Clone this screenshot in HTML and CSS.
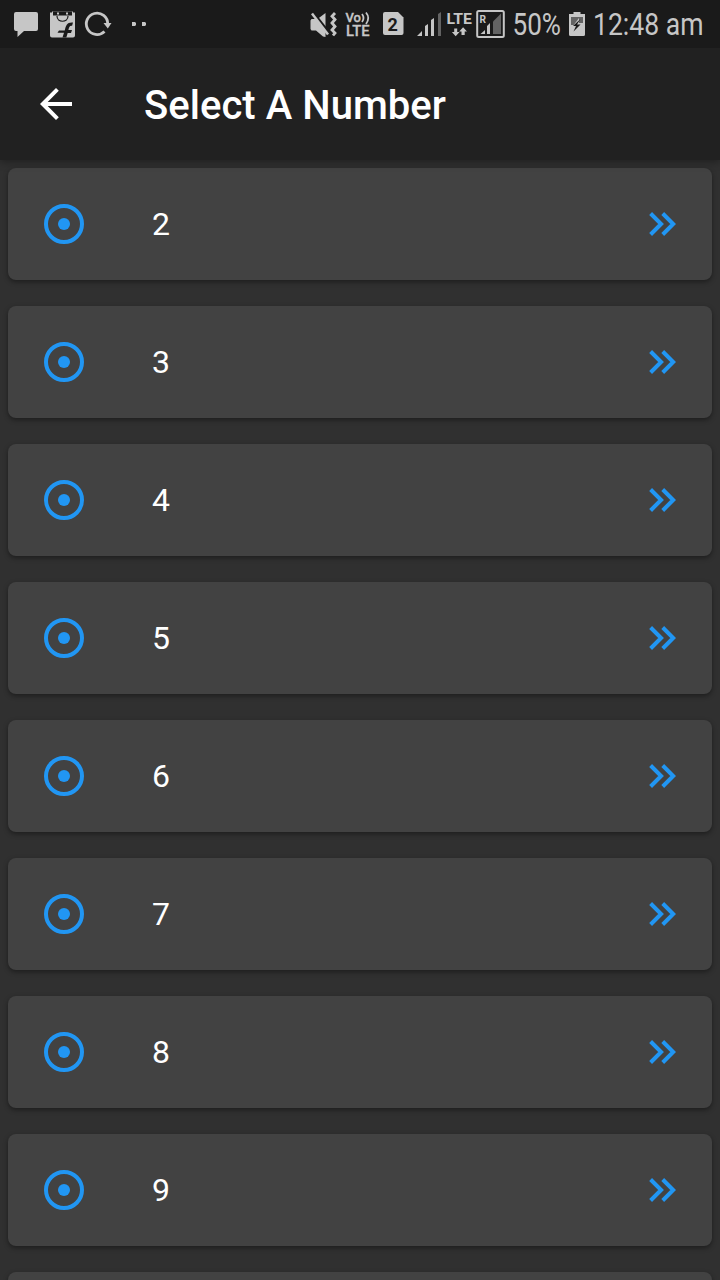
FILE: index.html
```
<!DOCTYPE html>
<html lang="en">
<head>
<meta charset="utf-8">
<title>Select A Number</title>
<link rel="stylesheet" href="styles.css">
</head>
<body>
<div class="status">
  <svg width="300" height="48" viewBox="0 0 300 48">
    <path d="M16 12h20q2 0 2 2v15q0 2-2 2H24l-6.500 6V31h-1.500q-2 0-2-2V14q0-2 2-2z"/>
    <path d="M50 12.500h2v-1h21v1h2v23q0 2-2 2H52q-2 0-2-2z"/>
    <path class="ink" d="M53 11.500h19v4H53z"/>
    <path d="M57 12.500h2v2h-2zM66 12.500h2v2h-2z"/>
    <path class="ink-line" d="M57 16c0 7 11 7 11 0" stroke-width="1.200"/>
    <path class="ink" d="M62.500 37.500l1.500-4.700h-6.500l1.500-2.300h5.700c1.200-5 2.300-8.600 8.300-8l-.9 3.300c-2.600-.5-3 1.500-3.700 4.200h3.600l-1 3h-3.300l-1.400 4.500z"/>
    <path class="line" d="M104.500 31.500a10.700 10.700 0 1 1 3.200-7.500" stroke-width="2.800"/>
    <path d="M103.500 23h8l-3.700 5.500z"/>
    <path d="M132 22h3l1 1v2l-1 1h-3zM142 22h3l1 1v2l-1 1h-3z"/>
  </svg>
  <svg width="205" height="48" viewBox="300 0 205 48">
    <path d="M310.500 20.500l1-1.500h6l8-6v24l-2.500-.5-7-6h-4.500l-1-1.500z"/>
    <path class="bg-line" d="M312.500 11.500L331 35" stroke-width="2.500"/>
    <path class="line" d="M312 13.500L328 34.500" stroke-width="2.500"/>
    <path class="line" d="M335 13l-3 3.200 3 3.300-3 3.500 3 3.500-3 3.500 3 3-2 2.500" stroke-width="2.800"/>
    <text class="medium" x="345.500" y="22" font-size="12.500" textLength="15.500" lengthAdjust="spacingAndGlyphs">Vo</text>
    <path class="line" d="M362 14q3 4 0 8M366 12.500q4.500 5.500 0 11.500" stroke-width="1.800"/>
    <text class="medium" x="346" y="36" font-size="15" textLength="23.500" lengthAdjust="spacingAndGlyphs">LTE</text>
    <path d="M385 12h13l5.500 5.500V33q0 2-2 2H385q-2 0-2-2V14q0-2 2-2z"/>
    <text class="bold ink" x="387.500" y="30.500" font-size="18">2</text>
    <path d="M417 36l5-5v5zM425 26l3-2v12h-3zM431 20l3-2v18h-3z"/>
    <path class="dim" d="M438 14l3-2v24h-3z"/>
    <text class="bold" x="446.500" y="24" font-size="15.500" textLength="25.500" lengthAdjust="spacingAndGlyphs">LTE</text>
    <path d="M454.200 28.500h3v3.500h2.300l-3.800 4.200-3.800-4.200h2.300zM461.500 35h3.200v-3.500h2.300l-3.900-4.300-3.900 4.300h2.300z"/>
    <rect class="line" x="477.200" y="11" width="26.600" height="26" rx="1.500" stroke-width="2"/>
    <text class="bold" x="479.500" y="22.500" font-size="11" textLength="6.500" lengthAdjust="spacingAndGlyphs">R</text>
    <path d="M480.500 34l4.500-4v4zM487 26l3-3v11h-3z"/>
    <path class="dim" d="M493 21.500l8-8V34h-8z"/>
  </svg>
  <svg width="215" height="48" viewBox="505 0 215 48">
    <text x="512.500" y="35" font-size="30.500" textLength="48.500" lengthAdjust="spacingAndGlyphs">50%</text>
    <path d="M573.500 12h7v2h4.500v20.500q0 1.500-1.500 1.500h-13q-1.500 0-1.500-1.500V14h4.500z"/>
    <path class="dim" d="M571 17h12v8h-12z"/>
    <path d="M579 18l-6 8v1h10v-4h-4z"/>
    <path class="ink" d="M580.500 19l-7.500 7h3l-2.500 5.500 7-7h-3.500z"/>
    <text x="593" y="35" font-size="30.500" textLength="110.500" lengthAdjust="spacingAndGlyphs">12:48 am</text>
  </svg>
</div>
<header class="appbar">
  <svg class="back" width="32" height="32" viewBox="0 0 32 32"><path d="M32 14H7.700L18.800 2.800 16 0 0 16l16 16 2.800-2.800L7.700 18H32z"/></svg>
  <h1 class="title">Select A Number</h1>
</header>
<svg class="defs" width="0" height="0">
  <symbol id="ring" viewBox="0 0 40 40"><circle class="ring" cx="20" cy="20" r="18"/><circle class="dot" cx="20" cy="20" r="6"/></symbol>
  <symbol id="next" viewBox="0 0 28 24"><path class="chevrons" d="M2.600 1.500L13.100 12 2.600 22.500M14.700 1.500L25.200 12 14.700 22.500"/></symbol>
</svg>
<main class="list">
  <div class="card"><svg class="target"><use href="#ring"/></svg><span class="num">2</span><svg class="go"><use href="#next"/></svg></div>
  <div class="card"><svg class="target"><use href="#ring"/></svg><span class="num">3</span><svg class="go"><use href="#next"/></svg></div>
  <div class="card"><svg class="target"><use href="#ring"/></svg><span class="num">4</span><svg class="go"><use href="#next"/></svg></div>
  <div class="card"><svg class="target"><use href="#ring"/></svg><span class="num">5</span><svg class="go"><use href="#next"/></svg></div>
  <div class="card"><svg class="target"><use href="#ring"/></svg><span class="num">6</span><svg class="go"><use href="#next"/></svg></div>
  <div class="card"><svg class="target"><use href="#ring"/></svg><span class="num">7</span><svg class="go"><use href="#next"/></svg></div>
  <div class="card"><svg class="target"><use href="#ring"/></svg><span class="num">8</span><svg class="go"><use href="#next"/></svg></div>
  <div class="card"><svg class="target"><use href="#ring"/></svg><span class="num">9</span><svg class="go"><use href="#next"/></svg></div>
  <div class="card"></div>
</main>
</body>
</html>
```

FILE: styles.css
```
* { box-sizing: border-box; }
body {
  margin: 0;
  height: 1280px;
  overflow: hidden;
  display: flex;
  flex-direction: column;
  background: #303030;
  color: #fff;
  font-family: Roboto, sans-serif;
}
svg { display: block; flex: none; }
.status { flex: none; display: flex; height: 48px; background: #1a1a1a; fill: #c6c6c6; z-index: 2; }
.status .bold { font-weight: 700; }
.status .medium { font-weight: 500; stroke: #c6c6c6; stroke-width: .3px; }
.status .ink { fill: #1a1a1a; }
.status .dim { fill: #636363; }
.status .line { fill: none; stroke: #c6c6c6; }
.status .ink-line, .status .bg-line { fill: none; stroke: #1a1a1a; }
.appbar {
  flex: none;
  display: flex;
  align-items: center;
  height: 112px;
  padding-left: 40px;
  gap: 72px;
  background: #212121;
  box-shadow: 0 2px 8px rgba(0, 0, 0, .35);
  z-index: 1;
}
.back { fill: #fff; }
.title { margin: 0; padding-top: 3px; font-size: 40px; font-weight: 500; line-height: 48px; letter-spacing: .04px; white-space: nowrap; }
.defs { position: absolute; }
.list { flex: 1; min-height: 0; overflow: hidden; display: flex; flex-direction: column; gap: 26px; padding: 8px 8px 0; }
.card {
  flex: none;
  display: flex;
  align-items: center;
  height: 112px;
  padding: 0 36px;
  border-radius: 8px;
  background: #424242;
  box-shadow: 0 2px 5px rgba(0, 0, 0, .4);
}
.target { width: 40px; height: 40px; }
.num { flex: 1; margin-left: 68px; font-size: 32px; line-height: 40px; }
.go { width: 28px; height: 24px; }
.ring { fill: none; stroke: #2196f3; stroke-width: 4px; }
.dot { fill: #2196f3; }
.chevrons { fill: none; stroke: #2196f3; stroke-width: 4px; }
```
